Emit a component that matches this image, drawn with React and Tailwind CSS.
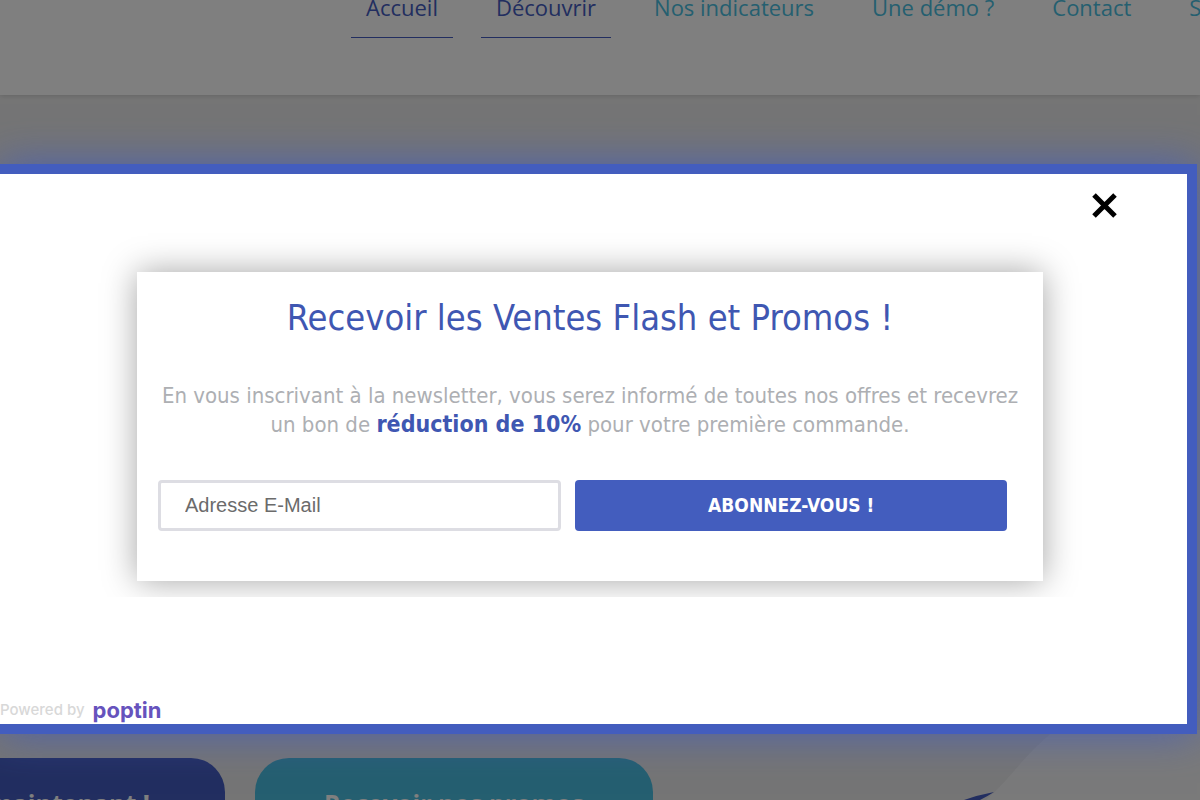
import { useState } from "react";

const NAV_ITEMS = [
	{ label: "Accueil", active: true },
	{ label: "Découvrir", active: true },
	{ label: "Nos indicateurs" },
	{ label: "Une démo ?" },
	{ label: "Contact" },
	{ label: "S" },
];

function SiteHeader() {
	return (
		<header className="relative z-10 h-[95px] overflow-hidden bg-white shadow-[0_1px_5px_rgba(0,0,0,0.15)]">
			<nav className="-mt-[9px] flex gap-7 whitespace-nowrap pl-[351px] font-['Open_Sans',sans-serif] text-[22px] leading-8">
				{NAV_ITEMS.map(({ label, active }) => (
					<a
						key={label}
						href="#"
						className={
							active
								? "border-b border-[#445cc0] px-[15px] pb-[14px] text-[#445cc0]"
								: "px-[15px] pb-[14px] text-[#4abee0]"
						}>
						{label}
					</a>
				))}
			</nav>
		</header>
	);
}

function Hero() {
	return (
		<main className="relative flex grow flex-col justify-end bg-[#ebebeb]">
			{/* Decorative curve, bottom right */}
			<svg className="absolute right-0 bottom-0 h-[70px] w-[240px]" viewBox="0 0 240 70" fill="none">
				<path d="M26 70C50 50 66 22 96 0H240V70Z" fill="#f5f5f5" />
				<path d="M4 70Q18 65 34 62Q28 66 20 70Z" fill="#445cc0" />
			</svg>
			<div className="relative flex h-[42px] gap-[30px] overflow-hidden font-['Open_Sans',sans-serif] text-[25px] font-bold whitespace-nowrap text-white">
				<a href="#" className="flex h-[92px] w-[225px] shrink-0 items-center justify-end rounded-r-[34px] bg-[#445cc0] pr-[75px]">
					maintenant !
				</a>
				<a href="#" className="flex h-[92px] w-[398px] shrink-0 items-center justify-center rounded-[34px] bg-[#4abee0]">
					Recevoir nos promos
				</a>
			</div>
		</main>
	);
}

function NewsletterCard() {
	const [email, setEmail] = useState("");

	return (
		<div className="overflow-hidden px-10 pt-10 pb-4">
			<section className="bg-white px-[21px] pt-6 pb-[50px] text-center font-['DejaVu_Sans_Condensed','DejaVu_Sans',sans-serif] shadow-[0_0_32px_rgba(0,0,0,0.36)]">
				<h2 className="text-4xl leading-[44px] text-[#3f57b2]">
					Recevoir les Ventes Flash et Promos !
				</h2>
				<p className="mt-[42px] text-[22px] leading-7 text-[#adafb3]">
					En vous inscrivant à la newsletter, vous serez informé de toutes nos offres et recevrez
					un bon de <strong className="text-[23px] font-bold text-[#3f57b2]">réduction de 10%</strong> pour
					votre première commande.
				</p>
				<form
					className="mt-[41px] mr-[15px] grid grid-cols-[403fr_431fr] gap-[14px]"
					onSubmit={(e) => e.preventDefault()}>
					<input
						type="email"
						aria-label="Adresse E-Mail"
						placeholder="Adresse E-Mail"
						value={email}
						onChange={(e) => setEmail(e.target.value)}
						className="h-[51px] w-full min-w-0 rounded border-[3px] border-[#dddde3] bg-white px-6 font-['Liberation_Sans',sans-serif] text-xl text-gray-700 placeholder:text-[#6b6b6b]"
					/>
					<button
						type="submit"
						className="h-[51px] rounded bg-[#435dbe] text-[19px] font-bold text-white">
						ABONNEZ-VOUS !
					</button>
				</form>
			</section>
		</div>
	);
}

export default function App() {
	const [open, setOpen] = useState(true);

	return (
		<div className="relative flex min-h-screen flex-col overflow-hidden">
			<SiteHeader />
			<Hero />

			{/* Popup */}
			{open && (
				<div className="absolute inset-0 z-20 bg-black/50 pt-[164px] pr-[3px]">
					<div
						role="dialog"
						aria-label="Newsletter"
						className="relative border-y-[10px] border-r-[10px] border-[#435dbe] bg-white pt-[58px] shadow-[0_0_40px_rgba(67,93,190,0.8)]">
						<button
							type="button"
							aria-label="Fermer"
							onClick={() => setOpen(false)}
							className="absolute top-[19px] right-[70px] text-black">
							<svg className="size-[25px]" viewBox="0 0 25 25" fill="none" stroke="currentColor" strokeWidth="5">
								<path d="M2 2L23 23M23 2L2 23" />
							</svg>
						</button>
						<div className="pr-[104px] pl-[97px]">
							<NewsletterCard />
						</div>
						<footer className="mt-[100px] flex h-[27px] items-center gap-2 pb-[2px] leading-6">
							<span className="font-['Inter',sans-serif] text-[15px] font-medium text-[#d8d8d8]">Powered by</span>
							<a href="#" className="font-['Inter',sans-serif] text-[22px] font-bold text-[#6653bd]">
								poptin
							</a>
						</footer>
					</div>
				</div>
			)}
		</div>
	);
}
